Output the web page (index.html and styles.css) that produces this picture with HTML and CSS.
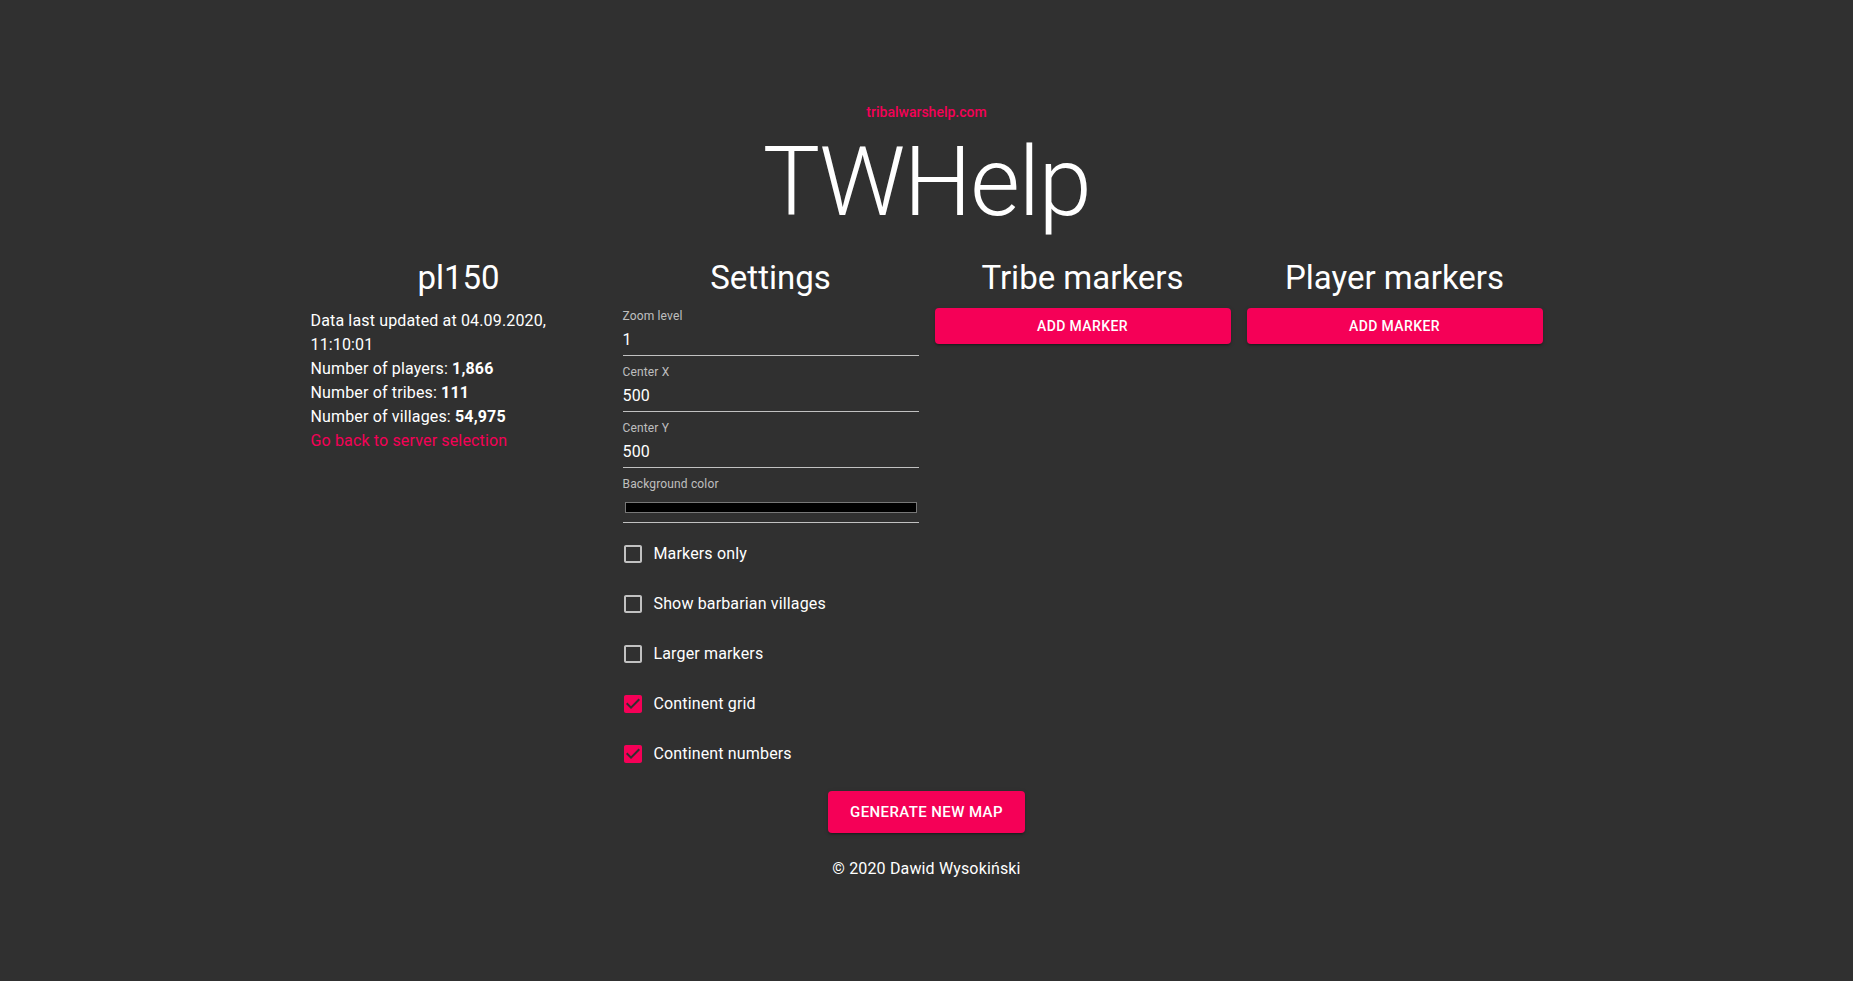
FILE: index.html
```html
<!DOCTYPE html>
<html lang="en">
<head>
<meta charset="utf-8">
<title>TWHelp - Map generator</title>
<link rel="stylesheet" href="styles.css">
</head>
<body>
<div class="page">
  <header class="hero">
    <a class="site-link" href="#">tribalwarshelp.com</a>
    <h1 class="title">TWHelp</h1>
  </header>
  <main class="container">
    <div class="grid">
      <section class="col">
        <h2 class="col-title">pl150</h2>
        <div class="info">
          <p>Data last updated at 04.09.2020, 11:10:01</p>
          <p>Number of players: <strong>1,866</strong></p>
          <p>Number of tribes: <strong>111</strong></p>
          <p>Number of villages: <strong>54,975</strong></p>
          <p><a class="link" href="#">Go back to server selection</a></p>
        </div>
      </section>
      <section class="col">
        <h2 class="col-title">Settings</h2>
        <div class="settings">
          <div class="field">
            <label class="field-label">Zoom level</label>
            <div class="field-input"><input class="input" type="text" value="1"></div>
          </div>
          <div class="field">
            <label class="field-label">Center X</label>
            <div class="field-input"><input class="input" type="text" value="500"></div>
          </div>
          <div class="field">
            <label class="field-label">Center Y</label>
            <div class="field-input"><input class="input" type="text" value="500"></div>
          </div>
          <div class="field field-last">
            <label class="field-label">Background color</label>
            <div class="field-input field-color"><div class="swatch"></div></div>
          </div>
          <label class="check">
            <span class="check-btn">
              <svg viewBox="0 0 24 24" class="check-icon"><path d="M19 5v14H5V5h14m0-2H5c-1.1 0-2 .9-2 2v14c0 1.1.9 2 2 2h14c1.1 0 2-.9 2-2V5c0-1.1-.9-2-2-2z"/></svg>
            </span>
            <span class="check-label">Markers only</span>
          </label>
          <label class="check">
            <span class="check-btn">
              <svg viewBox="0 0 24 24" class="check-icon"><path d="M19 5v14H5V5h14m0-2H5c-1.1 0-2 .9-2 2v14c0 1.1.9 2 2 2h14c1.1 0 2-.9 2-2V5c0-1.1-.9-2-2-2z"/></svg>
            </span>
            <span class="check-label">Show barbarian villages</span>
          </label>
          <label class="check">
            <span class="check-btn">
              <svg viewBox="0 0 24 24" class="check-icon"><path d="M19 5v14H5V5h14m0-2H5c-1.1 0-2 .9-2 2v14c0 1.1.9 2 2 2h14c1.1 0 2-.9 2-2V5c0-1.1-.9-2-2-2z"/></svg>
            </span>
            <span class="check-label">Larger markers</span>
          </label>
          <label class="check">
            <span class="check-btn">
              <svg viewBox="0 0 24 24" class="check-icon checked"><path d="M19 3H5c-1.11 0-2 .9-2 2v14c0 1.1.89 2 2 2h14c1.11 0 2-.9 2-2V5c0-1.1-.89-2-2-2zm-9 14l-5-5 1.41-1.41L10 14.17l7.59-7.59L19 8l-9 9z"/></svg>
            </span>
            <span class="check-label">Continent grid</span>
          </label>
          <label class="check">
            <span class="check-btn">
              <svg viewBox="0 0 24 24" class="check-icon checked"><path d="M19 3H5c-1.11 0-2 .9-2 2v14c0 1.1.89 2 2 2h14c1.11 0 2-.9 2-2V5c0-1.1-.89-2-2-2zm-9 14l-5-5 1.41-1.41L10 14.17l7.59-7.59L19 8l-9 9z"/></svg>
            </span>
            <span class="check-label">Continent numbers</span>
          </label>
        </div>
      </section>
      <section class="col">
        <h2 class="col-title">Tribe markers</h2>
        <button class="btn btn-full" type="button">Add marker</button>
      </section>
      <section class="col">
        <h2 class="col-title">Player markers</h2>
        <button class="btn btn-full" type="button">Add marker</button>
      </section>
    </div>
    <div class="actions">
      <button class="btn btn-large" type="button">Generate new map</button>
    </div>
    <footer class="footer">© 2020 Dawid Wysokiński</footer>
  </main>
</div>
</body>
</html>
```
FILE: styles.css
```css
html, body {
  margin: 0;
  padding: 0;
  background: #303030;
}
body {
  color: #fff;
  font-family: Roboto, "Liberation Sans", sans-serif;
  font-size: 16px;
  line-height: 1.5;
  min-height: 981px;
}
.page {
  padding-top: 102px;
}
.hero {
  display: flex;
  flex-direction: column;
  align-items: center;
}
.site-link {
  display: block;
  color: #f50057;
  text-decoration: none;
  font-size: 14px;
  font-weight: 500;
  line-height: 20px;
}
.title {
  margin: 4px 0 0;
  font-size: 96px;
  font-weight: 300;
  line-height: 112px;
  letter-spacing: -1.5px;
}
.container {
  width: 1232px;
  margin: 0 auto;
}
.grid {
  display: grid;
  grid-template-columns: repeat(4, 1fr);
  column-gap: 16px;
  margin-top: 17px;
}
.col {
  display: flex;
  flex-direction: column;
  min-width: 0;
}
.col-title {
  margin: 0 0 9px;
  padding-top: 2px;
  font-size: 33px;
  font-weight: 400;
  line-height: 42px;
  text-align: center;
}
.info {
  padding-top: 1px;
}
.info p {
  margin: 0;
  font-size: 16px;
  line-height: 24px;
  letter-spacing: 0.15px;
}
.info strong {
  font-weight: 700;
}
.link {
  color: #f50057;
  text-decoration: none;
}
.settings {
  display: flex;
  flex-direction: column;
  gap: 8px;
}
.field {
  display: flex;
  flex-direction: column;
}
.field-last {
  margin-bottom: 2px;
}
.field-label {
  font-size: 12px;
  line-height: 16px;
  color: rgba(255, 255, 255, 0.7);
  letter-spacing: 0.15px;
}
.field-input {
  border-bottom: 1px solid rgba(255, 255, 255, 0.7);
}
.input {
  display: block;
  width: 100%;
  box-sizing: border-box;
  height: 31px;
  padding: 6px 0 6px;
  margin: 0;
  border: 0;
  outline: none;
  background: transparent;
  color: #fff;
  font-family: Roboto, "Liberation Sans", sans-serif;
  font-size: 16px;
  line-height: 19px;
  letter-spacing: 0.15px;
}
.field-color {
  height: 31px;
  box-sizing: border-box;
  padding: 10px 2px 0;
}
.swatch {
  height: 11px;
  box-sizing: border-box;
  background: #000;
  border: 1px solid #777;
}
.check {
  display: flex;
  align-items: center;
  margin-left: -11px;
  height: 42px;
  cursor: pointer;
}
.check-btn {
  display: flex;
  padding: 9px;
}
.check-icon {
  width: 24px;
  height: 24px;
  fill: rgba(255, 255, 255, 0.7);
}
.check-icon.checked {
  fill: #f50057;
}
.check-label {
  font-size: 16px;
  line-height: 24px;
  letter-spacing: 0.15px;
}
.btn {
  font-family: Roboto, "Liberation Sans", sans-serif;
  font-weight: 500;
  text-transform: uppercase;
  letter-spacing: 0.4px;
  color: #fff;
  background: #f50057;
  border: 0;
  border-radius: 4px;
  cursor: pointer;
  box-shadow: 0 3px 1px -2px rgba(0, 0, 0, 0.2), 0 2px 2px 0 rgba(0, 0, 0, 0.14), 0 1px 5px 0 rgba(0, 0, 0, 0.12);
}
.btn-full {
  display: block;
  width: 100%;
  font-size: 14px;
  line-height: 24px;
  padding: 6px 16px;
}
.actions {
  display: flex;
  justify-content: center;
  margin-top: 16px;
}
.btn-large {
  font-size: 15px;
  line-height: 26px;
  padding: 8px 22px;
}
.footer {
  margin-top: 24px;
  text-align: center;
  font-size: 16px;
  line-height: 24px;
  letter-spacing: 0.15px;
}
```
